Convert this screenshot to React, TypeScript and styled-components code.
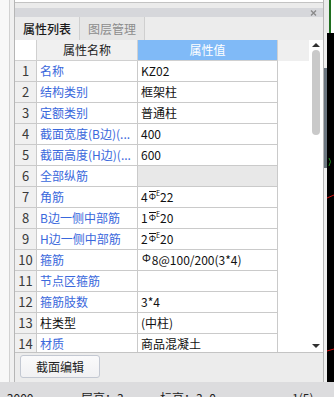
import React from 'react';
import styled, { createGlobalStyle } from 'styled-components';

const GlobalStyle = createGlobalStyle`
  html, body { margin: 0; padding: 0; }
  body {
    font-family: "Noto Sans CJK SC", "Microsoft YaHei", sans-serif;
    font-size: 12px;
    color: #111;
  }
  * { box-sizing: border-box; }
`;

const Page = styled.div`
  width: 334px;
  height: 397px;
  overflow: hidden;
  display: flex;
  flex-direction: column;
  background: #ececec;
`;

const Workspace = styled.div`
  display: flex;
  height: 382px;
  flex: none;
`;

const LeftGutter = styled.div`
  width: 14px;
  background: linear-gradient(to right, #f8f8f8 9px, #d2d2d2 9px 10px, #f0f0f0 10px);
`;

const PanelColumn = styled.div`
  width: 310px;
  display: flex;
  flex-direction: column;
  border-left: 1px solid #b6b6b6;
  border-right: 1px solid #b6b6b6;
  background: #ececec;
`;

const TopBox = styled.div`
  height: 3px;
  background: #ffffff;
  border-bottom: 1px solid #c3c3c3;
`;

const TopGap = styled.div`
  height: 5px;
  background: #ebebeb;
`;

const TitleBar = styled.div`
  height: 9px;
  background: #d6d7db;
  display: flex;
  justify-content: flex-end;
  align-items: center;
  padding-right: 6px;
`;

const TabStrip = styled.div`
  height: 23px;
  display: flex;
  background: #ececec;
`;

const Tab = styled.div<{ $active?: boolean }>`
  width: 65px;
  border-right: 1px solid #cfcfcf;
  background: ${(p) => (p.$active ? '#ececec' : '#e6e6e6')};
  color: ${(p) => (p.$active ? '#1a1a1a' : '#8c8c8c')};
  font-size: 12px;
  font-weight: ${(p) => (p.$active ? 500 : 400)};
  line-height: 23px;
  text-align: center;
`;

const GridArea = styled.div`
  height: 313px;
  display: flex;
  border-bottom: 1px solid #c4c4c4;
  background: #ffffff;
`;

const Table = styled.div`
  width: 294px;
  overflow: hidden;
  display: flex;
  flex-direction: column;
`;

const RowBase = styled.div`
  display: grid;
  grid-template-columns: 22px 101px 140px 31px;
  height: 21px;
  flex: none;
`;

const HeaderCorner = styled.div`
  background: #ffffff;
  border-right: 1px solid #d0d0d0;
  border-bottom: 1px solid #d0d0d0;
`;

const HeaderCell = styled.div<{ $selected?: boolean }>`
  background: ${(p) => (p.$selected ? '#80baf7' : '#f0f0f0')};
  color: ${(p) => (p.$selected ? '#ffffff' : '#222')};
  border-right: 1px solid #d0d0d0;
  border-bottom: 1px solid #d0d0d0;
  text-align: center;
  line-height: 20px;
`;

const HeaderFill = styled.div`
  background: #efefef;
`;

const NumCell = styled.div`
  background: #f0f0f0;
  color: #3a3a3a;
  border-right: 1px solid #cacaca;
  border-bottom: 1px solid #cacaca;
  text-align: center;
  line-height: 20px;
  font-size: 13px;
`;

const NameCell = styled.div<{ $plain?: boolean }>`
  color: ${(p) => (p.$plain ? '#111' : '#3a68dc')};
  border-right: 1px solid #cacaca;
  border-bottom: 1px solid #cacaca;
  padding-left: 3px;
  line-height: 20px;
  white-space: nowrap;
  overflow: hidden;
`;

const ValueCell = styled.div<{ $group?: boolean }>`
  background: ${(p) => (p.$group ? '#e8e8e8' : '#ffffff')};
  color: #111;
  border-right: 1px solid #cacaca;
  border-bottom: 1px solid #cacaca;
  padding-left: 3px;
  line-height: 20px;
  white-space: nowrap;
  overflow: hidden;
`;

const RowFill = styled.div`
  background: #ffffff;
`;

const Steel = styled.span<{ $bar?: boolean }>`
  display: inline-block;
  font-size: ${(p) => (p.$bar ? 9 : 11)}px;
  line-height: ${(p) => (p.$bar ? 9 : 11)}px;
  vertical-align: ${(p) => (p.$bar ? 2 : 3)}px;
  margin: 0 ${(p) => (p.$bar ? 0 : 1)}px 0 1px;
  ${(p) => (p.$bar ? 'border-top: 1px solid #111;' : '')}
`;

const SupE = styled.span`
  font-size: 7px;
  line-height: 7px;
  vertical-align: 6px;
`;

const Scrollbar = styled.div`
  width: 14px;
  display: flex;
  flex-direction: column;
  align-items: center;
  padding: 3px 0 4px 0;
  background: #ffffff;
`;

const ArrowUp = styled.div`
  width: 0;
  height: 0;
  border-left: 4px solid transparent;
  border-right: 4px solid transparent;
  border-bottom: 4px solid #303030;
`;

const ArrowDown = styled.div`
  width: 0;
  height: 0;
  border-left: 4px solid transparent;
  border-right: 4px solid transparent;
  border-top: 4px solid #303030;
`;

const Thumb = styled.div`
  width: 8px;
  height: 85px;
  margin-top: 3px;
  border-radius: 4px;
  background: #c9c9c9;
`;

const TrackSpace = styled.div`
  flex: 1;
`;

const Footer = styled.div`
  height: 29px;
  padding: 2px 0 0 5px;
  background: #ececec;
`;

const Button = styled.button`
  width: 80px;
  height: 23px;
  border: 1px solid #c3c8d2;
  border-radius: 3px;
  background: linear-gradient(#fafafb, #f1f1f3);
  font-family: inherit;
  font-size: 12px;
  color: #222;
  line-height: 21px;
  padding: 0;
`;

const RightGutter = styled.div`
  width: 10px;
  display: flex;
  flex-direction: column;
`;

const RightTop = styled.div`
  height: 33px;
  background: linear-gradient(to right, #ebebeb 5px, #1f6e1f 5px 7px, #ffffff 7px);
`;

const RightLower = styled.div`
  flex: 1;
  display: flex;
`;

const SideStrip = styled.div`
  width: 3px;
  display: flex;
  flex-direction: column;
  background: #f0f0f0;
`;

const SideSlate = styled.div`
  margin-top: 35px;
  height: 100px;
  background: #6c7781;
`;

const Canvas = styled.div`
  flex: 1;
  background: #000000;
  position: relative;
`;

const CadMark = styled.svg`
  position: absolute;
  left: 0;
  top: 0;
`;

const StatusBar = styled.div`
  height: 15px;
  background: #dcdcde;
  display: flex;
  padding-top: 8px;
  font-size: 12px;
  line-height: 16px;
  color: #222;
  white-space: nowrap;
`;

const StatusItem = styled.span<{ $w: number }>`
  width: ${(p) => p.$w}px;
  flex: none;
`;

type Row = {
  n: number;
  name: string;
  value: React.ReactNode;
  plain?: boolean;
  group?: boolean;
};

const rows: Row[] = [
  { n: 1, name: '名称', value: 'KZ02' },
  { n: 2, name: '结构类别', value: '框架柱' },
  { n: 3, name: '定额类别', value: '普通柱' },
  { n: 4, name: '截面宽度(B边)(...', value: '400' },
  { n: 5, name: '截面高度(H边)(...', value: '600' },
  { n: 6, name: '全部纵筋', value: '', group: true },
  { n: 7, name: '角筋', value: <>4<Steel $bar>Φ</Steel><SupE>E</SupE>22</> },
  { n: 8, name: 'B边一侧中部筋', value: <>1<Steel $bar>Φ</Steel><SupE>E</SupE>20</> },
  { n: 9, name: 'H边一侧中部筋', value: <>2<Steel $bar>Φ</Steel><SupE>E</SupE>20</> },
  { n: 10, name: '箍筋', value: <><Steel>Φ</Steel>8@100/200(3*4)</> },
  { n: 11, name: '节点区箍筋', value: '' },
  { n: 12, name: '箍筋肢数', value: '3*4' },
  { n: 13, name: '柱类型', value: '(中柱)', plain: true },
  { n: 14, name: '材质', value: '商品混凝土' },
];

function CloseIcon() {
  return (
    <svg width="7" height="6" viewBox="0 0 7 6">
      <path d="M1 0.5 L6 5.5 M6 0.5 L1 5.5" stroke="#8a8a8a" strokeWidth="1.4" />
    </svg>
  );
}

export default function App() {
  return (
    <Page>
      <GlobalStyle />
      <Workspace>
        <LeftGutter />
        <PanelColumn>
          <TopBox />
          <TopGap />
          <TitleBar>
            <CloseIcon />
          </TitleBar>
          <TabStrip>
            <Tab $active>属性列表</Tab>
            <Tab>图层管理</Tab>
          </TabStrip>
          <GridArea>
            <Table>
              <RowBase>
                <HeaderCorner />
                <HeaderCell>属性名称</HeaderCell>
                <HeaderCell $selected>属性值</HeaderCell>
                <HeaderFill />
              </RowBase>
              {rows.map((r) => (
                <RowBase key={r.n}>
                  <NumCell>{r.n}</NumCell>
                  <NameCell $plain={r.plain}>{r.name}</NameCell>
                  <ValueCell $group={r.group}>{r.value}</ValueCell>
                  <RowFill />
                </RowBase>
              ))}
            </Table>
            <Scrollbar>
              <ArrowUp />
              <Thumb />
              <TrackSpace />
              <ArrowDown />
            </Scrollbar>
          </GridArea>
          <Footer>
            <Button>截面编辑</Button>
          </Footer>
        </PanelColumn>
        <RightGutter>
          <RightTop />
          <RightLower>
            <SideStrip>
              <SideSlate />
            </SideStrip>
            <Canvas>
              <CadMark width="7" height="349" viewBox="0 0 7 349">
                <path d="M2 125 Q5 128 2 133" stroke="#1f8a1f" fill="none" strokeWidth="1" />
                <path d="M0 165 L7 162" stroke="#d01010" strokeWidth="1" />
                <path d="M0 318 L7 316" stroke="#d01010" strokeWidth="1" />
              </CadMark>
            </Canvas>
          </RightLower>
        </RightGutter>
      </Workspace>
      <StatusBar>
        <StatusItem $w={81}>- 3000</StatusItem>
        <StatusItem $w={79}>层高：3</StatusItem>
        <StatusItem $w={132}>标高：3~0</StatusItem>
        <StatusItem $w={40}>1(5)</StatusItem>
      </StatusBar>
    </Page>
  );
}
